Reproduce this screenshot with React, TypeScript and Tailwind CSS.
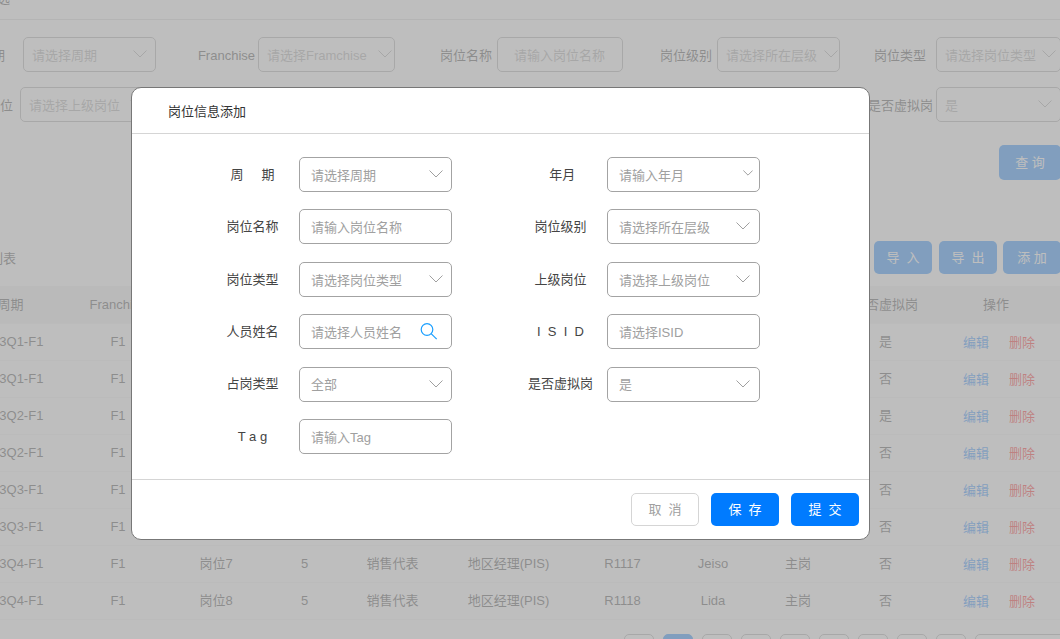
import type { ReactNode } from "react";

const field =
  "h-[35px] w-full rounded-[5px] border border-[#a3a3a3] bg-white pt-[2px] text-[13px] text-[#a0a0a0] placeholder:text-[#a0a0a0] outline-none";
const primary = "rounded-[5px] bg-[#007bff] text-[13px] text-white whitespace-pre";

function Chevron({ small = false }: { small?: boolean }) {
  return (
    <svg
      width={small ? 10 : 14}
      height={small ? 6 : 8}
      viewBox="0 0 14 8"
      fill="none"
      stroke="#a0a0a0"
      strokeWidth={small ? 1.4 : 1}
    >
      <path d="M0.5 0.5 7 7 13.5 0.5" />
    </svg>
  );
}

type SelectProps = {
  id: string;
  text: string;
  pad?: string;
  arrow?: string;
  small?: boolean;
};

function Select({ id, text, pad = "px-[11px]", arrow = "right-[9px]", small }: SelectProps) {
  return (
    <div className="relative w-full">
      <select id={id} className={`${field} ${pad} appearance-none`}>
        <option>{text}</option>
      </select>
      <span className={`pointer-events-none absolute top-[13px] ${arrow}`}>
        <Chevron small={small} />
      </span>
    </div>
  );
}

type FilterProps = {
  id: string;
  label: string;
  labelClass: string;
  width: string;
  children: ReactNode;
};

function Filter({ id, label, labelClass, width, children }: FilterProps) {
  return (
    <div className="flex shrink-0 items-center">
      <label htmlFor={id} className={`${labelClass} shrink-0 pt-[2px] text-right whitespace-nowrap`}>
        {label}
      </label>
      <div className={width}>{children}</div>
    </div>
  );
}

function Field({ id, label, children }: { id: string; label: string; children: ReactNode }) {
  return (
    <div className="flex items-center">
      <label htmlFor={id} className="w-[93px] shrink-0 text-center whitespace-pre text-[#444]">
        {label}
      </label>
      <div className="relative w-[153px]">{children}</div>
    </div>
  );
}

const columns = [
  { name: "周期", width: "w-[141px]" },
  { name: "Franchise", width: "w-[74px]" },
  { name: "岗位名称", width: "w-[122px]" },
  { name: "级别", width: "w-[55px]" },
  { name: "岗位类型", width: "w-[121px]" },
  { name: "上级岗位", width: "w-[111px]" },
  { name: "ISID", width: "w-[117px]" },
  { name: "姓名", width: "w-[64px]" },
  { name: "占岗类型", width: "w-[106px]" },
  { name: "是否虚拟岗", width: "w-[69px]" },
  { name: "操作", width: "w-[156px]" },
];

const rows = [
  ["2023Q1-F1", "F1", "岗位1", "5", "销售代表", "地区经理(PIS)", "R1111", "Amy", "主岗", "是"],
  ["2023Q1-F1", "F1", "岗位2", "5", "销售代表", "地区经理(PIS)", "R1112", "Tom", "主岗", "否"],
  ["2023Q2-F1", "F1", "岗位3", "5", "销售代表", "地区经理(PIS)", "R1113", "Jack", "主岗", "是"],
  ["2023Q2-F1", "F1", "岗位4", "5", "销售代表", "地区经理(PIS)", "R1114", "Lucy", "主岗", "否"],
  ["2023Q3-F1", "F1", "岗位5", "5", "销售代表", "地区经理(PIS)", "R1115", "Rose", "主岗", "否"],
  ["2023Q3-F1", "F1", "岗位6", "5", "销售代表", "地区经理(PIS)", "R1116", "Mike", "主岗", "否"],
  ["2023Q4-F1", "F1", "岗位7", "5", "销售代表", "地区经理(PIS)", "R1117", "Jeiso", "主岗", "否"],
  ["2023Q4-F1", "F1", "岗位8", "5", "销售代表", "地区经理(PIS)", "R1118", "Lida", "主岗", "否"],
];

function Filters() {
  return (
    <div className="flex flex-col gap-[15px] pt-[17px]">
      <div className="flex">
        <Filter id="f-cycle" label="周期" labelClass="w-[83px] pr-[18px]" width="w-[133px]">
          <Select id="f-cycle" text="请选择周期" pad="px-2" />
        </Filter>
        <Filter id="f-franchise" label="Franchise" labelClass="w-[102px] pr-[3px]" width="w-[137px]">
          <Select id="f-franchise" text="请选择Framchise" pad="px-2" arrow="right-[3px]" />
        </Filter>
        <Filter id="f-name" label="岗位名称" labelClass="w-[102px] pr-[5px]" width="w-[126px]">
          <input id="f-name" className={`${field} px-4`} placeholder="请输入岗位名称" />
        </Filter>
        <Filter id="f-level" label="岗位级别" labelClass="w-[94px] pr-[5px]" width="w-[123px]">
          <Select id="f-level" text="请选择所在层级" pad="pl-2" arrow="right-[2px]" />
        </Filter>
        <Filter id="f-type" label="岗位类型" labelClass="w-[96px] pr-[10px]" width="w-[125px]">
          <Select id="f-type" text="请选择岗位类型" pad="pl-2" arrow="right-[5px]" />
        </Filter>
      </div>
      <div className="flex">
        <Filter id="f-parent" label="上级岗位" labelClass="w-[80px] pr-[7px]" width="w-[133px]">
          <Select id="f-parent" text="请选择上级岗位" pad="px-2" />
        </Filter>
        <Filter id="f-virtual" label="是否虚拟岗" labelClass="w-[783px] pr-[3px]" width="w-[125px]">
          <Select id="f-virtual" text="是" pad="px-2" />
        </Filter>
      </div>
    </div>
  );
}

function Page() {
  return (
    <div className="-mt-10 -ml-[60px] w-[1136px]">
      <header className="h-[60px] border-b border-[#d5d5d5] pt-[29px] pl-[44px]">筛选</header>
      <Filters />
      <div className="mt-[23px] pl-[1059px]">
        <button className={`${primary} h-[35px] w-[62px]`}>查 询</button>
      </div>
      <div className="mt-[61px] flex items-center pl-6">
        <h2 className="w-[910px] pt-[2px] pl-[26px]">列表</h2>
        <button className={`${primary} mr-[7px] h-[33px] w-[58px]`}>导  入</button>
        <button className={`${primary} mr-[6px] h-[33px] w-[58px]`}>导  出</button>
        <button className={`${primary} h-[33px] w-[58px]`}>添 加</button>
      </div>
      <table className="mt-3 w-full table-fixed text-center whitespace-nowrap">
        <thead>
          <tr className="h-[37px] border-b border-[#f2f2f2] bg-[#eee]">
            {columns.map((c) => (
              <th key={c.name} className={`${c.width} font-normal last:pr-1`}>
                {c.name}
              </th>
            ))}
          </tr>
        </thead>
        <tbody>
          {rows.map((row) => (
            <tr key={row[2]} className="h-[37px] border-b border-[#f2f2f2]">
              {row.map((cell, i) => (
                <td key={i}>{cell}</td>
              ))}
              <td className="pt-[2px] pl-[2px]">
                <a href="#edit" className="mr-5 text-[#007bff]">
                  编辑
                </a>
                <a href="#delete" className="text-[#ff0000]">
                  删除
                </a>
              </td>
            </tr>
          ))}
        </tbody>
      </table>
      <div className="mt-[14px] flex gap-[9px] pl-[684px]">
        {["‹", "1", "2", "3", "4", "5", "6", "7", "›"].map((p) => (
          <button
            key={p}
            className={`h-[30px] w-[30px] shrink-0 rounded-[5px] border ${
              p === "1" ? "border-[#007bff] bg-[#007bff] text-white" : "border-[#a3a3a3]"
            }`}
          >
            {p}
          </button>
        ))}
        <button className="h-[30px] w-[90px] shrink-0 rounded-[5px] border border-[#a3a3a3]">10 条/页</button>
      </div>
    </div>
  );
}

function Dialog() {
  return (
    <div
      role="dialog"
      aria-labelledby="dialog-title"
      className="mt-[87px] mr-[190px] ml-[131px] flex-1 rounded-[10px] border border-[#777] bg-white"
    >
      <h2 id="dialog-title" className="flex h-[46px] items-center border-b border-[#d5d5d5] pt-[2px] pl-9">
        岗位信息添加
      </h2>
      <form>
        <div className="mt-[23px] mb-[25px] grid min-h-[297px] grid-cols-[246px_246px] content-between gap-x-[62px] pl-[74px]">
          <Field id="cycle" label="周     期">
            <Select id="cycle" text="请选择周期" />
          </Field>
          <Field id="month" label=" 年月">
            <Select id="month" text="请输入年月" arrow="right-[7px]" small />
          </Field>
          <Field id="name" label="岗位名称">
            <input id="name" className={`${field} px-[11px]`} placeholder="请输入岗位名称" />
          </Field>
          <Field id="level" label="岗位级别">
            <Select id="level" text="请选择所在层级" arrow="right-[10px]" />
          </Field>
          <Field id="type" label="岗位类型">
            <Select id="type" text="请选择岗位类型" />
          </Field>
          <Field id="parent" label="上级岗位">
            <Select id="parent" text="请选择上级岗位" arrow="right-[10px]" />
          </Field>
          <Field id="person" label="人员姓名">
            <input id="person" className={`${field} px-[11px]`} placeholder="请选择人员姓名" />
            <button type="button" aria-label="搜索" className="absolute top-[8px] right-[14px]">
              <svg width="18" height="18" viewBox="0 0 18 18" fill="none" stroke="#1a9fff" strokeWidth="1.2">
                <circle cx="7" cy="7.5" r="5.8" />
                <path d="M11.1 11.6 16.7 17.2" />
              </svg>
            </button>
          </Field>
          <Field id="isid" label="I  S  I  D">
            <input id="isid" className={`${field} px-[11px]`} placeholder="请选择ISID" />
          </Field>
          <Field id="post" label="占岗类型">
            <Select id="post" text="全部" />
          </Field>
          <Field id="virtual" label="是否虚拟岗">
            <Select id="virtual" text="是" arrow="right-[10px]" />
          </Field>
          <Field id="tag" label="T a g">
            <input id="tag" className={`${field} px-[11px]`} placeholder="请输入Tag" />
          </Field>
        </div>
        <div className="flex justify-end gap-3 border-t border-[#d5d5d5] py-[13px] pr-[10px]">
          <button
            type="button"
            className="h-[33px] w-[68px] rounded-[5px] border border-[#d5d5d5] text-[#a0a0a0] whitespace-pre"
          >
            取  消
          </button>
          <button type="button" className={`${primary} h-[33px] w-[68px]`}>
            保  存
          </button>
          <button type="submit" className={`${primary} h-[33px] w-[68px]`}>
            提  交
          </button>
        </div>
      </form>
    </div>
  );
}

function App() {
  return (
    <div className="h-screen overflow-hidden bg-white font-['Liberation_Sans','Noto_Sans_CJK_SC',sans-serif] text-[13px] text-[#333]">
      <Page />
      <div className="fixed inset-0 flex items-start bg-[#a9a9a9]/76">
        <Dialog />
      </div>
    </div>
  );
}

export default App;
